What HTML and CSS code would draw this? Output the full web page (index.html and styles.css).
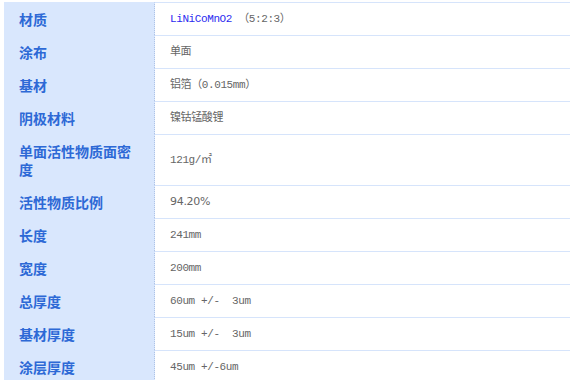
FILE: index.html
```html
<!DOCTYPE html>
<html lang="zh-CN">
<head>
  <meta charset="UTF-8" />
  <meta name="viewport" content="width=device-width, initial-scale=1.0"/>
  <title>正极片参数</title>
  <link rel="stylesheet" href="styles.css">
</head>
<body>
  <div class="spec-wrap">
    <table class="spec-table">
      <tr>
        <th>材质</th>
        <td><span class="formula">LiNiCoMnO2</span> （5:2:3）</td>
      </tr>
      <tr>
        <th>涂布</th>
        <td>单面</td>
      </tr>
      <tr>
        <th>基材</th>
        <td>铝箔（0.015mm）</td>
      </tr>
      <tr>
        <th>阴极材料</th>
        <td>镍钴锰酸锂</td>
      </tr>
      <tr>
        <th>单面活性物质面密度</th>
        <td>121g/㎡</td>
      </tr>
      <tr>
        <th>活性物质比例</th>
        <td class="num">94.20%</td>
      </tr>
      <tr>
        <th>长度</th>
        <td>241mm</td>
      </tr>
      <tr>
        <th>宽度</th>
        <td>200mm</td>
      </tr>
      <tr>
        <th>总厚度</th>
        <td>60um +/-&nbsp; 3um</td>
      </tr>
      <tr>
        <th>基材厚度</th>
        <td>15um +/-&nbsp; 3um</td>
      </tr>
      <tr>
        <th>涂层厚度</th>
        <td>45um +/-6um</td>
      </tr>
    </table>
  </div>
</body>
</html>
```

FILE: styles.css
```css
body {
  margin: 0;
  background: #fff;
  overflow: hidden;
}
.spec-wrap {
  padding: 2px 0 0 4px;
}
.spec-table {
  width: 566px;
  border-collapse: separate;
  border-spacing: 0;
  table-layout: fixed;
}
.spec-table th {
  width: 120px;
  padding: 7px 15px;
  background-color: #d9e7fd;
  border-top: 1px solid #d9e7fd;
  border-right: 1px dotted #aec3e6;
  color: #2d69d6;
  font-family: "Noto Sans CJK SC", sans-serif;
  font-size: 14px;
  font-weight: bold;
  line-height: 18px;
  text-align: left;
  vertical-align: middle;
}
.spec-table td {
  padding: 7px 15px;
  border-top: 1px solid #d6e4fb;
  color: #666;
  font-family: "Liberation Mono", "Noto Sans CJK SC", monospace;
  font-size: 11px;
  letter-spacing: -0.4px;
  line-height: 18px;
  vertical-align: middle;
}
.spec-table td.num {
  font-family: "DejaVu Sans", sans-serif;
  font-size: 11px;
  letter-spacing: -0.3px;
}
.formula {
  color: #2b2bf0;
}
```
